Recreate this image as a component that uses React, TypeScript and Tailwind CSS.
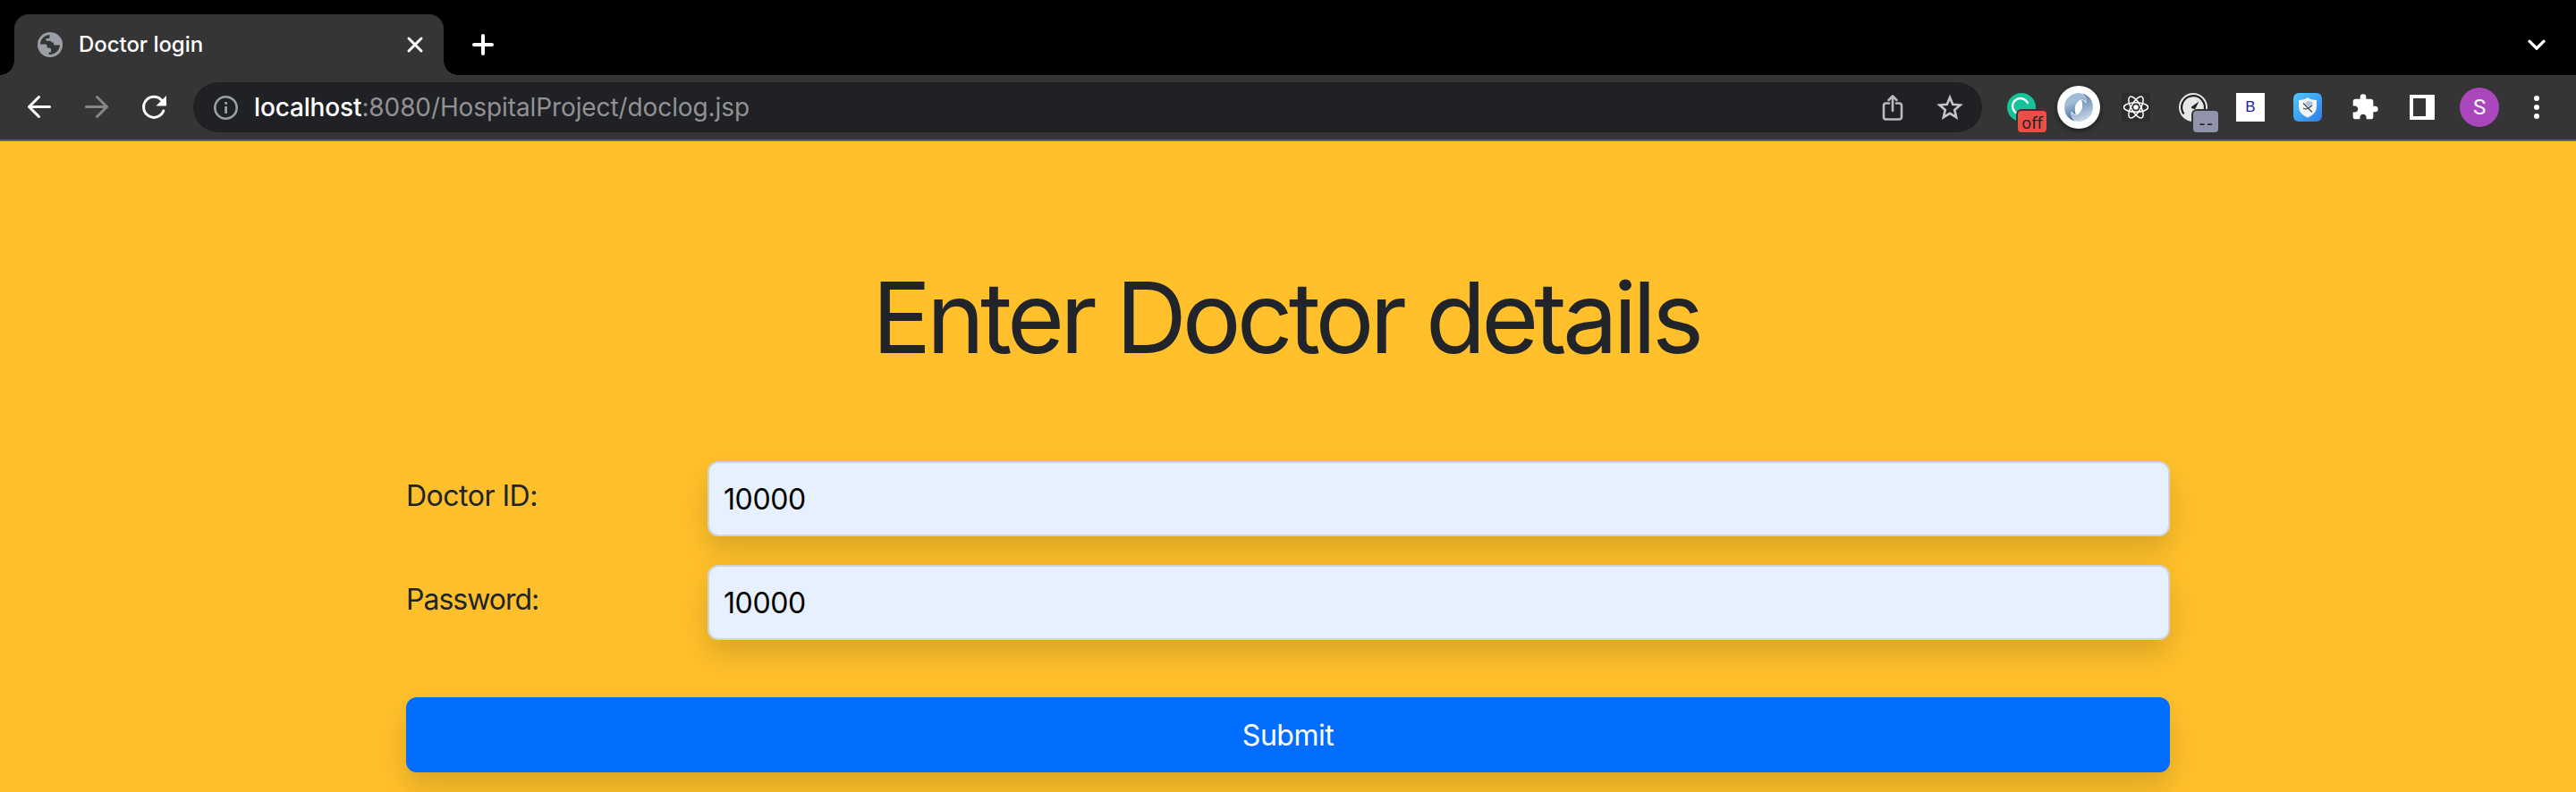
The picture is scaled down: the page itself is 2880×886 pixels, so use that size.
import React from "react";

function Globe() {
  return (
    <svg className="size-8" viewBox="0 0 32 32">
      <circle cx="16" cy="16" r="14" fill="#9aa0a6" />
      <path d="M5 15.500C5.200 10 9.500 5.400 15.500 5v2.500c0 1-.7 1.600-1.600 1.600h-2.400v2.600h6.500c1.400 0 2 .9 2 2v1.600c0 .8.6 1.300 1.400 1.300H27c-.4 5.600-5 10.400-11 10.400-.6 0-1-.1-1.500-.2v-2.400h2.600v-2.600c0-1.300-.9-2.200-2.200-2.200h-2.300v-2c0-1.200-.9-2.100-2.100-2.100z" fill="#353535" />
      <path d="M16 5h6v8.500h-4.200l-1.500-2.800z" fill="#9aa0a6" />
    </svg>
  );
}

function TabStrip() {
  return (
    <div className="flex h-[84px] items-end bg-black">
      <div className="h-4 w-4 shrink-0 bg-[radial-gradient(circle_at_0_0,#000_15.500px,#353535_16px)]" />
      <div className="flex h-[68px] w-[480px] items-center rounded-t-[16px] bg-[#353535] pr-[22px] pl-6">
        <Globe />
        <span className="ml-4 flex-1 text-[24px] font-[450] tracking-[-0.050px] text-white">Doctor login</span>
        <svg className="size-5" viewBox="0 0 20 20" stroke="#fff" strokeWidth="3" strokeLinecap="round">
          <path d="M3 3l14 14M17 3L3 17" />
        </svg>
      </div>
      <div className="h-4 w-4 shrink-0 bg-[radial-gradient(circle_at_100%_0,#000_15.500px,#353535_16px)]" />
      <div className="flex h-[68px] flex-1 items-center justify-between pr-[33px] pl-4">
        <svg className="size-6" viewBox="0 0 24 24" stroke="#fff" strokeWidth="4" strokeLinecap="round">
          <path d="M12 2v20M2 12h20" />
        </svg>
        <svg className="h-3 w-[22px]" viewBox="0 0 22 12" fill="none" stroke="#fff" strokeWidth="3.200" strokeLinecap="round">
          <path d="M3 2.200l8 8 8-8" />
        </svg>
      </div>
    </div>
  );
}

function Toolbar() {
  return (
    <div className="flex h-[74px] items-center border-b-2 border-[#636367] bg-[#353535] pr-8 pl-7">
      <svg className="size-8" viewBox="0 0 32 32" fill="none" stroke="#fff" strokeWidth="3" strokeLinecap="round" strokeLinejoin="round">
        <path d="M27.500 15.500H4.500M15.500 4.500L4.500 15.500 15.500 26.500" />
      </svg>
      <svg className="ml-8 size-8" viewBox="0 0 32 32" fill="none" stroke="#868686" strokeWidth="3" strokeLinecap="round" strokeLinejoin="round">
        <path d="M4.500 15.500h23M16.500 4.500L27.500 15.500 16.500 26.500" />
      </svg>
      <svg className="ml-8 size-8" viewBox="0 0 32 32">
        <path d="M26.800 20A11.500 11.500 0 1 1 24.500 8" fill="none" stroke="#fff" strokeWidth="3" strokeLinecap="round" />
        <path d="M30 3v11.500H18.500z" fill="#fff" />
      </svg>
      <div className="ml-7 flex h-14 w-[2000px] items-center rounded-full bg-[#202124] pr-5 pl-5">
        <svg className="size-8" viewBox="0 0 32 32">
          <circle cx="16.500" cy="16.500" r="12.200" fill="none" stroke="#9aa0a6" strokeWidth="2.600" />
          <path d="M15.200 15h2.800v8h-2.800zM15.200 10h2.800v2.800h-2.800z" fill="#9aa0a6" />
        </svg>
        <span className="ml-4 flex-1 text-[28px] tracking-[-0.100px] text-[#919294]">
          <span className="font-[450] tracking-[-0.150px] text-white">localhost</span>:8080/HospitalProject/doclog.jsp
        </span>
        <svg className="size-8" viewBox="0 0 32 32" fill="none" stroke="#b9babb" strokeWidth="2.600" strokeLinecap="round" strokeLinejoin="round">
          <path d="M12 11.500H8.500a2.500 2.500 0 0 0-2.500 2.500v13a2.500 2.500 0 0 0 2.500 2.500h15a2.500 2.500 0 0 0 2.500-2.500V14a2.500 2.500 0 0 0-2.500-2.500H20M16 20V4M11.500 8L16 3.500 20.500 8" />
        </svg>
        <svg className="ml-8 size-8" viewBox="0 0 32 32" fill="none" stroke="#c4c5c6" strokeWidth="2.600">
          <path d="M16 5l3.200 7.800 8.400.7-6.400 5.500 2 8.200L16 22.800l-7.200 4.400 2-8.200-6.400-5.500 8.400-.7z" />
        </svg>
      </div>
      <div className="ml-5 flex flex-1 items-center justify-between">
        <div className="relative ml-2 size-8">
          <svg className="size-8" viewBox="0 0 32 32">
            <circle cx="16" cy="16" r="16" fill="#15c39a" />
            <path d="M22.800 11A8.800 8.800 0 1 0 10.500 22.500" fill="none" stroke="#fff" strokeWidth="2.400" strokeLinecap="round" />
          </svg>
          <span className="absolute top-5 left-3 flex h-6 w-8 items-center justify-center rounded-[4px] bg-[#e94f47] pt-px font-['Noto_Sans'] text-[18px] leading-none text-[#202124] shadow-[0_0_0_2px_#353535]">off</span>
        </div>
        <div className="-mx-2 flex size-12 items-center justify-center rounded-full bg-white shadow-[0_2px_6px_rgba(0,0,0,0.5)]">
          <svg className="size-8" viewBox="0 0 32 32">
            <defs>
              <linearGradient id="swirlA" x1="0" y1="0" x2="0.4" y2="1">
                <stop offset="0" stopColor="#a0b9d3" />
                <stop offset="0.4" stopColor="#a3bdd6" />
                <stop offset="1" stopColor="#3a6798" />
              </linearGradient>
              <linearGradient id="swirlB" x1="0" y1="0" x2="0.3" y2="1">
                <stop offset="0" stopColor="#4f79a6" />
                <stop offset="0.5" stopColor="#7f9fc1" />
                <stop offset="1" stopColor="#c5d5e5" />
              </linearGradient>
            </defs>
            <path d="M17 0C7 0 0 7 0 16c0 8 5 14 12 15.500-4-3-5.500-7.500-4-11 1 1.500 2.200 3 5 4C11 19 11 12 17 8c3-1.500 5-.5 7 2C24.500 5 22 .8 17 0z" fill="url(#swirlA)" />
            <path d="M15 32c10 0 17-7 17-16C32 8 27 2 20 .5c4 3 5.500 7.500 4 11-1-1.500-2.200-3-5-4C21 13 21 20 15 24c-3 1.500-5 .5-7-2C7.500 27 10 31.200 15 32z" fill="url(#swirlB)" />
          </svg>
        </div>
        <svg className="size-8" viewBox="0 0 32 32">
          <rect width="32" height="32" rx="2" fill="#2d2d2d" />
          <g fill="none" stroke="#fff" strokeWidth="1.500">
            <ellipse cx="16" cy="16" rx="13.500" ry="5.200" />
            <ellipse cx="16" cy="16" rx="13.500" ry="5.200" transform="rotate(60 16 16)" />
            <ellipse cx="16" cy="16" rx="13.500" ry="5.200" transform="rotate(120 16 16)" />
          </g>
          <circle cx="16" cy="16" r="2.800" fill="#fff" />
        </svg>
        <div className="relative size-8">
          <svg className="size-8" viewBox="0 0 32 32">
            <circle cx="16" cy="16" r="16" fill="#e6e8e6" />
            <path d="M5.500 23.500A12.900 12.900 0 1 1 28.300 20" fill="none" stroke="#222" strokeWidth="2.200" />
            <path d="M22.500 9.500L18 18.200l-4-1.200v-1.500z" fill="#222" />
          </svg>
          <span className="absolute top-5 left-4 flex h-6 w-7 items-center justify-center rounded-[4px] bg-[#9193aa] pt-0.5 pl-0.5 font-['Liberation_Sans'] text-[21px] leading-none tracking-[1.500px] text-[#202124] shadow-[0_0_0_2px_#353535]">--</span>
        </div>
        <div className="flex size-8 items-center justify-center bg-white font-['Liberation_Sans'] text-[17px] text-[#2a20a8]">B</div>
        <svg className="size-8" viewBox="0 0 32 32">
          <defs>
            <linearGradient id="shieldBg" x1="0" y1="0" x2="1" y2="1">
              <stop offset="0" stopColor="#4fc8fb" />
              <stop offset="1" stopColor="#2f7de9" />
            </linearGradient>
          </defs>
          <rect width="32" height="32" rx="6" fill="url(#shieldBg)" />
          <path d="M16 5c3 2.300 6 3 10 3v7c0 6-4 10-10 12.500C10 25 6 21 6 15V8c4 0 7-.7 10-3z" fill="#f5f6f8" />
          <path d="M13.500 13c-.5-3 3-5 5.500-3.500 2.500 0 3.500 2 2.500 4L18 16z" fill="#b3c4dc" />
          <path d="M11 11.500l10 10M11 17c3 2 5 1 10-3" stroke="#444b55" strokeWidth="1.200" fill="none" />
        </svg>
        <svg className="size-8" viewBox="0 0 24 24" fill="#fff">
          <path d="M20.500 11H19V7c0-1.100-.9-2-2-2h-4V3.500a2.500 2.500 0 0 0-5 0V5H4c-1.100 0-1.990.9-1.990 2v3.800H3.500c1.490 0 2.700 1.210 2.700 2.700s-1.210 2.700-2.700 2.700H2V20c0 1.100.9 2 2 2h3.800v-1.500c0-1.490 1.210-2.700 2.700-2.700s2.700 1.210 2.700 2.700V22H17c1.100 0 2-.9 2-2v-4h1.500a2.500 2.500 0 0 0 0-5z" />
        </svg>
        <svg className="size-8" viewBox="0 0 32 32">
          <path fillRule="evenodd" d="M2 2h28v28H2zM6 6v20h14V6z" fill="#fff" />
        </svg>
        <div className="-mx-1.5 flex size-11 items-center justify-center rounded-full bg-[#ab47bc] font-['Roboto'] text-[24px] text-white">S</div>
        <svg className="-mr-1 size-8" viewBox="0 0 32 32" fill="#fff">
          <circle cx="16" cy="6" r="3" />
          <circle cx="16" cy="16" r="3" />
          <circle cx="16" cy="26" r="3" />
        </svg>
      </div>
    </div>
  );
}

function Field({ label, value, labelTracking }: { label: string; value: string; labelTracking: string }) {
  return (
    <div className="flex h-[84px] items-start">
      <label className={`w-[337px] pt-[15px] text-[32px] leading-[48px] text-[#212529] ${labelTracking}`}>{label}</label>
      <input
        readOnly
        value={value}
        className="h-[84px] flex-1 rounded-[12px] border-2 border-[#ced4da] bg-[#e7f0fe] px-4 text-[32px] tracking-[-0.4px] text-black shadow-[0_16px_32px_rgba(0,0,0,0.15)] outline-none"
      />
    </div>
  );
}

export default function App() {
  return (
    <div className="flex h-[886px] w-[2880px] flex-col overflow-hidden bg-[#ffc02b] font-['Inter',sans-serif]">
      <TabStrip />
      <Toolbar />
      <main className="mx-auto flex w-[1972px] flex-col">
        <h1 className="mt-[130px] pr-[5px] text-center text-[110px] leading-[134px] tracking-[-5px] text-[#212529]">Enter Doctor details</h1>
        <form className="mt-[94px] flex flex-col">
          <div className="flex flex-col gap-8">
            <Field label="Doctor ID:" value="10000" labelTracking="tracking-[-0.500px]" />
            <Field label="Password:" value="10000" labelTracking="tracking-[-1px]" />
          </div>
          <button type="button" className="mt-16 h-[84px] rounded-[12px] bg-[#036dfe] pt-0.5 text-[32px] tracking-[-0.500px] text-white shadow-[0_16px_32px_rgba(0,0,0,0.15)]">
            Submit
          </button>
        </form>
      </main>
    </div>
  );
}
